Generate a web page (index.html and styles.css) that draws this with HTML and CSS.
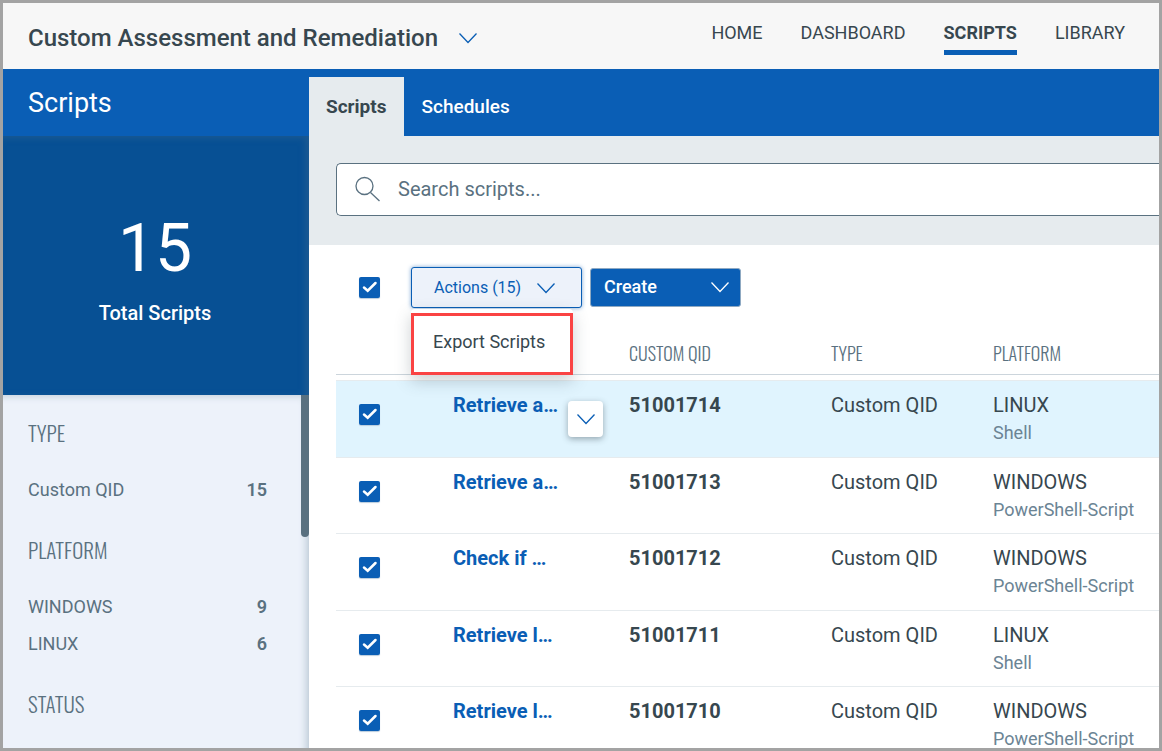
FILE: index.html
```html
<!DOCTYPE html>
<html lang="en">

<head>
  <meta charset="UTF-8" />
  <meta name="viewport" content="width=device-width, initial-scale=1.0" />
  <title>Custom Assessment and Remediation</title>
  <link rel="stylesheet" href="styles.css">
</head>

<body>

  <!-- Top bar -->
  <header class="topbar">
    <button type="button" class="app-switch">
      Custom Assessment and Remediation
      <svg class="chevron" width="20" height="12" viewBox="0 0 20 12"><path d="M1.5 1.5 10 10.5 18.5 1.5" /></svg>
    </button>
    <nav class="main-nav">
      <a href="#home">HOME</a>
      <a href="#dashboard">DASHBOARD</a>
      <a href="#scripts" class="active">SCRIPTS</a>
      <a href="#library">LIBRARY</a>
    </nav>
  </header>

  <div class="layout">

    <!-- Sidebar -->
    <aside class="sidebar">
      <h1 class="sidebar-title">Scripts</h1>
      <div class="total">
        <span class="total-number">15</span>
        <span class="total-label">Total Scripts</span>
      </div>
      <div class="filters">
        <h2>TYPE</h2>
        <ul>
          <li><a href="#custom-qid">Custom QID</a><b>15</b></li>
        </ul>
        <h2>PLATFORM</h2>
        <ul>
          <li><a href="#windows">WINDOWS</a><b>9</b></li>
          <li><a href="#linux">LINUX</a><b>6</b></li>
        </ul>
        <h2>STATUS</h2>
        <div class="scroll-thumb"></div>
      </div>
    </aside>

    <!-- Content -->
    <main class="content">
      <div class="tabs">
        <a href="#scripts" class="tab active">Scripts</a>
        <a href="#schedules" class="tab">Schedules</a>
      </div>

      <div class="search-area">
        <label class="search" for="search">
          <svg width="26" height="26" viewBox="0 0 26 26"><circle cx="9.5" cy="10" r="8.5" /><path d="M15.5 16.5 24.5 25" /></svg>
          <input type="text" id="search" placeholder="Search scripts..." aria-label="Search scripts" />
        </label>
      </div>

      <div class="list">
        <div class="toolbar">
          <input type="checkbox" class="check" aria-label="Select all scripts" checked />
          <div class="actions">
            <button type="button" class="btn btn-actions">
              Actions (15)
              <svg class="chevron" width="20" height="12" viewBox="0 0 20 12"><path d="M1.5 1.5 10 10.5 18.5 1.5" /></svg>
            </button>
            <div class="menu">
              <button type="button" class="menu-item">Export Scripts</button>
            </div>
          </div>
          <button type="button" class="btn btn-create">
            Create
            <svg class="chevron" width="20" height="12" viewBox="0 0 20 12"><path d="M1.5 1.5 10 10.5 18.5 1.5" /></svg>
          </button>
        </div>

        <table class="scripts">
          <colgroup>
            <col class="col-check" />
            <col class="col-name" />
            <col class="col-qid" />
            <col class="col-type" />
            <col />
          </colgroup>
          <thead>
            <tr>
              <th></th>
              <th></th>
              <th>CUSTOM QID</th>
              <th>TYPE</th>
              <th>PLATFORM</th>
            </tr>
          </thead>
          <tbody>
            <tr class="selected">
              <td><input type="checkbox" class="check" aria-label="Select 51001714" checked /></td>
              <td class="name">
                <a href="#51001714">Retrieve a…</a>
                <button type="button" class="row-menu" aria-label="Row actions">
                  <svg class="chevron" width="20" height="12" viewBox="0 0 20 12"><path d="M1.5 1.5 10 10.5 18.5 1.5" /></svg>
                </button>
              </td>
              <td class="qid">51001714</td>
              <td>Custom QID</td>
              <td>LINUX<small>Shell</small></td>
            </tr>
            <tr>
              <td><input type="checkbox" class="check" aria-label="Select 51001713" checked /></td>
              <td class="name"><a href="#51001713">Retrieve a…</a></td>
              <td class="qid">51001713</td>
              <td>Custom QID</td>
              <td>WINDOWS<small>PowerShell-Script</small></td>
            </tr>
            <tr>
              <td><input type="checkbox" class="check" aria-label="Select 51001712" checked /></td>
              <td class="name"><a href="#51001712">Check if …</a></td>
              <td class="qid">51001712</td>
              <td>Custom QID</td>
              <td>WINDOWS<small>PowerShell-Script</small></td>
            </tr>
            <tr>
              <td><input type="checkbox" class="check" aria-label="Select 51001711" checked /></td>
              <td class="name"><a href="#51001711">Retrieve l…</a></td>
              <td class="qid">51001711</td>
              <td>Custom QID</td>
              <td>LINUX<small>Shell</small></td>
            </tr>
            <tr>
              <td><input type="checkbox" class="check" aria-label="Select 51001710" checked /></td>
              <td class="name"><a href="#51001710">Retrieve l…</a></td>
              <td class="qid">51001710</td>
              <td>Custom QID</td>
              <td>WINDOWS<small>PowerShell-Script</small></td>
            </tr>
          </tbody>
        </table>
      </div>
    </main>

  </div>

</body>

</html>
```
FILE: styles.css
```css
* {
  box-sizing: border-box;
}

body {
  margin: 0;
  height: 100vh;
  display: flex;
  flex-direction: column;
  overflow: hidden;
  border: 3px solid #a3a3a3;
  background: #fff;
  color: #37474f;
  font-family: Roboto, "Liberation Sans", sans-serif;
  font-size: 20px;
}

a {
  color: inherit;
  text-decoration: none;
}

button {
  font-family: inherit;
  cursor: pointer;
}

.chevron {
  fill: none;
  stroke: currentColor;
  stroke-width: 1.3;
  flex-shrink: 0;
}

/* Top bar */
.topbar {
  display: flex;
  justify-content: space-between;
  align-items: flex-start;
  flex-shrink: 0;
  height: 66px;
  padding: 0 34px 0 25px;
  background: #f7f7f7;
}

.app-switch {
  display: flex;
  align-items: center;
  gap: 20px;
  height: 70px;
  padding: 0;
  border: 0;
  background: none;
  color: #37474f;
  font-size: 24px;
  font-weight: 500;
}

.app-switch .chevron {
  color: #0a5eb5;
}

.main-nav {
  display: flex;
  gap: 38px;
  padding-top: 17px;
  font-size: 18px;
  line-height: 26px;
}

.main-nav a {
  padding-bottom: 4px;
  border-bottom: 5px solid transparent;
}

.main-nav .active {
  border-color: #0a5eb5;
  font-weight: 700;
}

.layout {
  display: flex;
  flex: 1;
  min-height: 0;
}

/* Sidebar */
.sidebar {
  display: flex;
  flex-direction: column;
  flex-shrink: 0;
  width: 306px;
  background: #edf2fa;
}

.sidebar-title {
  flex-shrink: 0;
  height: 67px;
  margin: 0;
  padding-left: 25px;
  background: #0a5eb5;
  color: #fff;
  font-size: 27px;
  font-weight: 400;
  line-height: 68px;
}

.total {
  display: flex;
  flex-direction: column;
  align-items: center;
  flex-shrink: 0;
  height: 259px;
  padding: 73px 2px 0 0;
  background: #075094;
  box-shadow: inset -4px 2px 6px #1c5a92;
  color: #fff;
}

.total-number {
  font-size: 66px;
  line-height: 80px;
}

.total-label {
  font-size: 20px;
  font-weight: 500;
  line-height: 48px;
}

.filters {
  position: relative;
  flex: 1;
  min-height: 0;
  padding: 21px 42px 0 25px;
  box-shadow: inset -8px 6px 8px -6px #b4c4d0;
  color: #5a7180;
  overflow: hidden;
}

.filters h2 {
  margin: 0;
  font-family: Oswald, "Roboto Condensed", Roboto, sans-serif;
  font-size: 21px;
  font-weight: 300;
  line-height: 34px;
}

.filters ul {
  margin: 0;
  padding: 21px 0 25px;
  list-style: none;
}

.filters li {
  display: flex;
  justify-content: space-between;
  font-size: 18px;
  line-height: 37px;
}

.filters b {
  font-weight: 600;
}

.scroll-thumb {
  position: absolute;
  top: 0;
  right: 0;
  width: 8px;
  height: 142px;
  border-radius: 0 0 4px 4px;
  background: #5a7180;
}

/* Content */
.content {
  display: flex;
  flex-direction: column;
  flex: 1;
  min-width: 0;
}

.tabs {
  display: flex;
  flex-shrink: 0;
  height: 67px;
  padding-top: 8px;
  background: #0a5eb5;
}

.tab {
  padding: 0 18px 0 17px;
  color: #fff;
  font-size: 19px;
  font-weight: 500;
  line-height: 59px;
}

.tab.active {
  background: #e6ebee;
  color: #37474f;
  font-weight: 700;
}

.search-area {
  flex-shrink: 0;
  height: 109px;
  padding: 27px 0 0 27px;
  background: #e6ebee;
}

.search {
  display: flex;
  align-items: center;
  gap: 17px;
  height: 53px;
  padding: 0 0 2px 18px;
  border: 1px solid #5a7180;
  border-right: 0;
  border-radius: 5px 0 0 5px;
  background: #fff;
}

.search svg {
  fill: none;
  stroke: #5a7180;
  stroke-width: 1.3;
}

.search input {
  flex: 1;
  min-width: 0;
  padding: 0;
  border: 0;
  outline: 0;
  background: none;
  font-family: inherit;
  font-size: 20px;
}

.search input::placeholder {
  color: #5a7180;
}

.list {
  flex: 1;
  min-height: 0;
  padding: 22px 0 0 27px;
  overflow: hidden;
}

.toolbar {
  display: flex;
  align-items: center;
  padding-left: 23px;
}

.check {
  display: block;
  appearance: none;
  width: 21px;
  height: 21px;
  margin: 0;
  border-radius: 2px;
  background: #0a5eb5 url("data:image/svg+xml,%3Csvg xmlns='http://www.w3.org/2000/svg' viewBox='0 0 21 21'%3E%3Cpath d='M5 10.500 8.700 13.700 16.500 6' fill='none' stroke='white' stroke-width='2.500' stroke-linecap='round'/%3E%3C/svg%3E");
  box-shadow: 0 1px 1px #b9cbdc;
}

.actions {
  position: relative;
  margin: 0 8px 0 31px;
}

.btn {
  display: flex;
  align-items: center;
  border-radius: 3px;
}

.btn-actions {
  gap: 15px;
  width: 171px;
  height: 41px;
  padding: 0 0 0 22px;
  border: 1px solid #0a5eb5;
  background: #edf2fa;
  box-shadow: 0 0 4px #7ba5d2;
  color: #0a5eb5;
  font-size: 16px;
}

.btn-create {
  justify-content: space-between;
  width: 151px;
  height: 39px;
  padding: 0 10px 2px 13px;
  border: 1px solid #8fa9c2;
  background: #0a5eb5;
  color: #fff;
  font-size: 18px;
  font-weight: 500;
}

.menu {
  position: absolute;
  z-index: 1;
  top: 42px;
  left: 0;
  width: 162px;
  padding-top: 4px;
  border-radius: 4px 4px 0 0;
  background: #fff;
  box-shadow: 0 6px 16px rgba(55, 71, 79, 0.25);
}

.menu-item {
  display: block;
  width: 100%;
  height: 62px;
  padding: 0 0 6px 19px;
  border: 3px solid #fa4343;
  background: #fff;
  color: #37474f;
  font-size: 18px;
  text-align: left;
}

/* Scripts table */
.scripts {
  width: 100%;
  border-collapse: separate;
  border-spacing: 0;
  table-layout: fixed;
}

.col-check {
  width: 117px;
}

.col-name {
  width: 176px;
}

.col-qid {
  width: 202px;
}

.col-type {
  width: 162px;
}

.scripts th {
  height: 67px;
  padding: 23px 0 0;
  border-bottom: 1px solid #ccd5dc;
  color: #5a7180;
  font-family: Oswald, "Roboto Condensed", Roboto, sans-serif;
  font-size: 18px;
  font-weight: 300;
  text-align: left;
}

.scripts tbody::before {
  content: "";
  display: block;
  height: 5px;
}

.scripts td {
  height: 77px;
  padding: 10px 0 0;
  border-top: 1px solid #e6ebee;
  line-height: 28px;
  vertical-align: top;
}

.scripts tr:nth-child(even) td {
  height: 76px;
}

.scripts td .check {
  margin: 13px 0 0 23px;
}

.scripts .selected td {
  background: #e0f4fe;
}

.scripts small {
  display: block;
  color: #6b8494;
  font-size: 18px;
}

.name {
  position: relative;
  color: #0a5eb5;
  font-weight: 700;
}

.qid {
  font-weight: 700;
}

.row-menu {
  position: absolute;
  top: 20px;
  left: 115px;
  display: flex;
  align-items: center;
  justify-content: center;
  width: 35px;
  height: 36px;
  padding: 0;
  border: 0;
  border-radius: 4px;
  background: #fff;
  box-shadow: 0 2px 6px rgba(55, 71, 79, 0.45);
  color: #0a5eb5;
}
```
